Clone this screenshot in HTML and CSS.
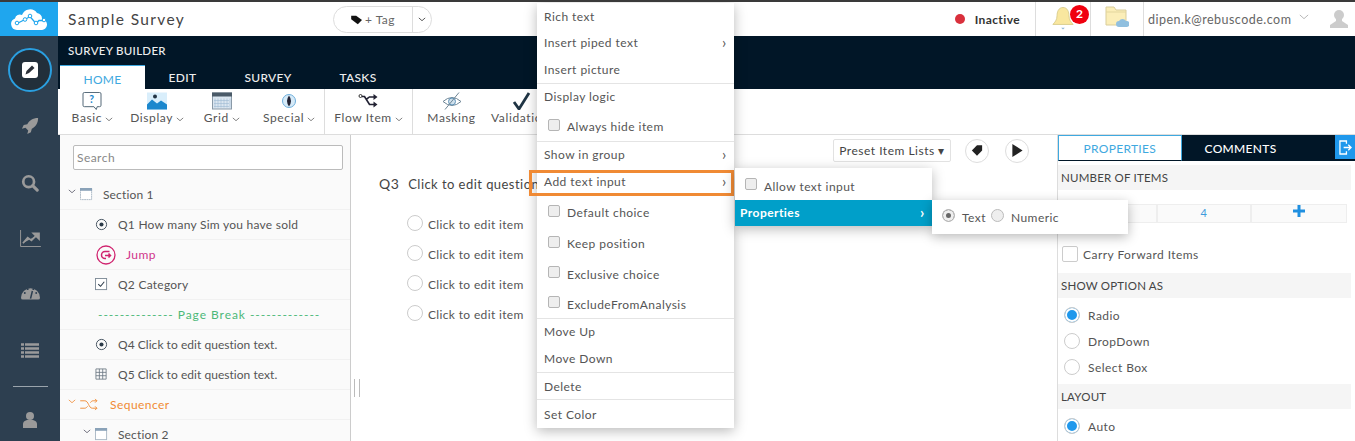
FILE: index.html
```html
<!DOCTYPE html>
<html lang="en">
<head>
<meta charset="utf-8">
<title>Sample Survey</title>
<link rel="stylesheet" href="styles.css">
</head>
<body>
<header class="topbar">
  <div class="logo">
    <svg viewBox="0 0 38 22" class="logo-svg"><path d="M7 22a6 6 0 0 1-2-11.600A5 5 0 0 1 12 7a8.500 8.500 0 0 1 15-2 6 6 0 0 1 5 6 5.500 5.500 0 0 1-1 11z" fill="#fff"/><path d="M8 15l7-3.500 5-3 6 7 3-3h4" fill="none" stroke="#1fa6ee" stroke-width="1.300"/><circle cx="7" cy="15" r="1.800" fill="#fff" stroke="#1fa6ee"/><circle cx="15" cy="11.500" r="1.800" fill="#fff" stroke="#1fa6ee"/><circle cx="20" cy="8" r="1.800" fill="#fff" stroke="#1fa6ee"/><circle cx="26" cy="15" r="1.800" fill="#fff" stroke="#1fa6ee"/><circle cx="34" cy="12" r="1.800" fill="#fff" stroke="#1fa6ee"/></svg>
  </div>
  <div class="title">Sample Survey</div>
  <div class="tagpill">
    <span class="tagmain"><svg viewBox="0 0 14 12" class="tagicon"><path d="M0 1h6l7 5-5 5-8-6z" fill="#111"/></svg>+ Tag</span>
    <span class="tagcaret"><svg viewBox="0 0 10 6" class="chev-s"><path d="M1 1l4 3.500L9 1" fill="none" stroke="#555" stroke-width="1.200"/></svg></span>
  </div>
  <div class="status"><i class="dot"></i>Inactive</div>
  <div class="hcell bellcell">
    <svg viewBox="0 0 24 26" class="bell"><path d="M12 1c5 0 6.500 5 6.500 9 0 5 2.500 7 4.500 9.500H1c2-2.500 4.500-4.500 4.500-9.500C5.500 6 7 1 12 1z" fill="#f9e79f" stroke="#d8cc8c"/><path d="M10 23h4l-2 2z" fill="#8fb6d8"/></svg>
    <span class="badge">2</span>
  </div>
  <div class="hcell foldercell">
    <svg viewBox="0 0 24 22" class="folder"><path d="M1 1h8l2 3h10v15H1z" fill="#fbeeb8" stroke="#d9cd9a"/><path d="M1 6h20" stroke="#e3d69d"/><path d="M14 21a3 3 0 0 1 0-6 4 4 0 0 1 7 0 3 3 0 0 1 1 6z" fill="#90bfdf"/></svg>
  </div>
  <div class="account">dipen.k@rebuscode.com
    <svg viewBox="0 0 12 7" class="chev-m"><path d="M1 1l5 4.500L11 1" fill="none" stroke="#aaa"/></svg>
    <svg viewBox="0 0 20 20" class="avatar"><circle cx="10" cy="6" r="5" fill="#ccc"/><path d="M7 10v2l-6 4v3h18v-3l-6-4v-2z" fill="#ccc"/></svg>
  </div>
</header>

<div class="content">
  <nav class="rail">
    <div class="rail-active"><svg viewBox="0 0 16 16" class="ico-edit"><rect width="16" height="16" rx="3" fill="#fff"/><path d="M3.500 12.500l1-3.500 5.500-5.500 2.500 2.500L7 11z" fill="#2a2f38"/><path d="M10.800 2.800l2.400 2.400" stroke="#fff" stroke-width=".7"/></svg></div>
    <svg viewBox="0 0 20 20" class="rail-ico rocket"><path d="M19 1c-6 0-10 3-12 7l-4 1-2 4 4-1 3 3-1 4 4-2 1-4c4-2 7-6 7-12z" fill="#9a9a9a"/></svg>
    <svg viewBox="0 0 20 20" class="rail-ico search"><circle cx="8.500" cy="8.500" r="6" fill="none" stroke="#9a9a9a" stroke-width="3"/><path d="M13 13l5 5" stroke="#9a9a9a" stroke-width="3.400" stroke-linecap="round"/></svg>
    <svg viewBox="0 0 22 18" class="rail-ico chart"><path d="M.500 0v17.500H22" fill="none" stroke="#9a9a9a"/><path d="M3 14l5-6 4 3 5-5M14 3.500h6v6z" fill="#9a9a9a" stroke="#9a9a9a" stroke-width="1.800"/></svg>
    <svg viewBox="0 0 20 16" class="rail-ico gauge"><path d="M0 14a10 10 0 1 1 20 0q0 2-2 2H2q-2 0-2-2z" fill="#9a9a9a"/><path d="M10 15l2-8" stroke="#2c3e50" stroke-width="1.600"/><circle cx="4" cy="9" r="1" fill="#2c3e50"/><circle cx="7" cy="5" r="1" fill="#2c3e50"/><circle cx="13" cy="5" r="1" fill="#2c3e50"/><circle cx="16" cy="9" r="1" fill="#2c3e50"/></svg>
    <svg viewBox="0 0 18 15" class="rail-ico list"><path d="M0 1.500h3M4 1.500h14M0 5.500h3M4 5.500h14M0 9.500h3M4 9.500h14M0 13.500h3M4 13.500h14" stroke="#9a9a9a" stroke-width="2.400"/></svg>
    <div class="rail-line"></div>
    <svg viewBox="0 0 14 16" class="rail-ico user"><circle cx="7" cy="4" r="4" fill="#9a9a9a"/><path d="M0 16v-4q0-3 4-4h6q4 1 4 4v4z" fill="#9a9a9a"/></svg>
  </nav>

  <div class="workspace">
    <div class="nav">
      <div class="nav-title">SURVEY BUILDER</div>
      <div class="tabs">
        <span class="tab tab-on">HOME</span>
        <span class="tab tab-edit">EDIT</span>
        <span class="tab tab-survey">SURVEY</span>
        <span class="tab tab-tasks">TASKS</span>
      </div>
    </div>

    <div class="ribbon">
      <div class="rgroup rgroup-q">
        <div class="ritem ritem-basic">
          <svg viewBox="0 0 20 19" class="ricon"><path d="M2 .500h16q1.500 0 1.500 1.500v12q0 1.500-1.500 1.500h-2.500l-1 3-2.500-3H2Q.500 15.500.500 14V2Q.500.500 2 .500z" fill="#fff" stroke="#4a6070"/><text x="10" y="12" class="qmark">?</text></svg>
          <span class="rlabel">Basic<svg viewBox="0 0 10 6" class="chev-r"><path d="M1 1l4 3.500L9 1" fill="none" stroke="#666"/></svg></span>
        </div>
        <div class="ritem ritem-display">
          <svg viewBox="0 0 20 17" class="ricon"><rect width="20" height="17" fill="#d9eefb"/><path d="M0 17v-5l5-5 5 4 4-3 6 4v5z" fill="#1b87cd"/><circle cx="8" cy="4" r="2" fill="#234"/></svg>
          <span class="rlabel">Display<svg viewBox="0 0 10 6" class="chev-r"><path d="M1 1l4 3.500L9 1" fill="none" stroke="#666"/></svg></span>
        </div>
        <div class="ritem ritem-grid">
          <svg viewBox="0 0 20 17" class="ricon"><rect x=".5" y=".5" width="19" height="16" fill="#dbe6f0" stroke="#8a9aa8"/><rect width="20" height="4" fill="#4a5a68"/><path d="M3 6v9M6 6v9M9 6v9M12 6v9M15 6v9M18 6v9M2 8h15M2 11h15M2 14h15" stroke="#9ebbd4" stroke-width=".6"/></svg>
          <span class="rlabel">Grid<svg viewBox="0 0 10 6" class="chev-r"><path d="M1 1l4 3.500L9 1" fill="none" stroke="#666"/></svg></span>
        </div>
        <div class="ritem ritem-special">
          <svg viewBox="0 0 20 17" class="ricon"><circle cx="10" cy="8.500" r="6.500" fill="#d6eaf8" stroke="#6daedb"/><path d="M10 3q4 5.500 0 11-4-5.500 0-11z" fill="#223"/></svg>
          <span class="rlabel">Special<svg viewBox="0 0 10 6" class="chev-r"><path d="M1 1l4 3.500L9 1" fill="none" stroke="#666"/></svg></span>
        </div>
      </div>
      <div class="rgroup rgroup-flow">
        <div class="ritem">
          <svg viewBox="0 0 20 15" class="ricon"><circle cx="2.500" cy="2.500" r="1.500" fill="none" stroke="#333"/><path d="M4 3h2.500l5 8h5M11 3.500l-3 3M11 3.500h5" fill="none" stroke="#223" stroke-width="1.700"/><path d="M15.500 .5l4 3-4 3zM15.500 8l4 3-4 3z" fill="#223"/></svg>
          <span class="rlabel">Flow Item<svg viewBox="0 0 10 6" class="chev-r"><path d="M1 1l4 3.500L9 1" fill="none" stroke="#666"/></svg></span>
        </div>
      </div>
      <div class="rgroup rgroup-mask">
        <div class="ritem ritem-mask">
          <svg viewBox="0 0 20 17" class="ricon"><path d="M1 9q9-8 18 0-9 8-18 0z" fill="none" stroke="#6f8696"/><circle cx="10" cy="9" r="3.500" fill="#cfe0ec" stroke="#5f93b8"/><path d="M17 0L3 17" stroke="#6f8696"/></svg>
          <span class="rlabel">Masking</span>
        </div>
        <div class="ritem ritem-valid">
          <svg viewBox="0 0 20 18" class="ricon"><path d="M3 10l5 7L18 1" fill="none" stroke="#1f3444" stroke-width="2.800"/></svg>
          <span class="rlabel">Validation</span>
        </div>
      </div>
    </div>

    <div class="panes">
      <aside class="tree">
        <div class="searchwrap"><div class="searchbox">Search</div></div>
        <div class="row row-sec"><svg viewBox="0 0 10 6" class="tchev"><path d="M1 1l4 3.500L9 1" fill="none" stroke="#556"/></svg><svg viewBox="0 0 14 14" class="ticon"><rect x=".5" y=".5" width="12" height="12" fill="#fff" stroke="#a9b7c4" stroke-dasharray="2 .5"/><rect width="13" height="3" fill="#8aa2b8"/></svg><span class="tl-sec">Section 1</span></div>
        <div class="row row-q"><svg viewBox="0 0 14 14" class="ticon"><circle cx="7" cy="7" r="5.500" fill="none" stroke="#3b4a58"/><circle cx="7" cy="7" r="2.200" fill="#2b3a48"/></svg><span class="tl-q">Q1 How many Sim you have sold</span></div>
        <div class="row row-jump"><svg viewBox="0 0 20 20" class="jicon"><circle cx="10" cy="10" r="9" fill="none" stroke="#d0246f" stroke-width="1.300"/><path d="M13.500 6.500H9a3.500 3.500 0 0 0 0 7h1M9 10.500h5.500M12.500 8.500l2 2-2 2" fill="none" stroke="#d0246f" stroke-width="1.500"/></svg><span class="tl-jump">Jump</span></div>
        <div class="row row-q"><svg viewBox="0 0 14 14" class="ticon"><rect x=".5" y=".5" width="12" height="12" fill="#fff" stroke="#7d8a96"/><path d="M3.500 6.500l2.500 2.500 4-5" fill="none" stroke="#2b3a48" stroke-width="1.100"/></svg><span class="tl-q">Q2 Category</span></div>
        <div class="row row-break">-------------- Page Break -------------</div>
        <div class="row row-q"><svg viewBox="0 0 14 14" class="ticon"><circle cx="7" cy="7" r="5.500" fill="none" stroke="#3b4a58"/><circle cx="7" cy="7" r="2.200" fill="#2b3a48"/></svg><span class="tl-q tl-tight">Q4 Click to edit question text.</span></div>
        <div class="row row-q"><svg viewBox="0 0 14 14" class="ticon"><path d="M1 1h11v11H1zM1 4.700h11M1 8.300h11M4.700 1v11M8.300 1v11" fill="none" stroke="#6b7782" stroke-width=".9"/></svg><span class="tl-q tl-tight">Q5 Click to edit question text.</span></div>
        <div class="row row-seq"><svg viewBox="0 0 10 6" class="tchev"><path d="M1 1l4 3.500L9 1" fill="none" stroke="#f08a34"/></svg><svg viewBox="0 0 20 14" class="sicon"><path d="M0 3h5c4 0 4 8 8 8h5M0 11h5c1 0 2-1 3-2M11 5c1-1 1-2 3-2h4M16 1l2 2-2 2M16 9l2 2-2 2" fill="none" stroke="#f08a34"/></svg><span class="tl-seq">Sequencer</span></div>
        <div class="row row-sec2"><svg viewBox="0 0 10 6" class="tchev"><path d="M1 1l4 3.500L9 1" fill="none" stroke="#556"/></svg><svg viewBox="0 0 14 14" class="ticon"><rect x=".5" y=".5" width="12" height="12" fill="#fff" stroke="#a9b7c4"/><rect width="13" height="3" fill="#8aa2b8"/></svg><span class="tl-sec2">Section 2</span></div>
      </aside>

      <main class="canvas">
        <div class="grip"></div>
        <div class="tools">
          <div class="preset">Preset Item Lists ▾</div>
          <div class="circ"><svg viewBox="0 0 14 14" class="circ-ico"><path d="M13 1v6l-6 6-6-6 6-6z" fill="#222"/></svg></div>
          <div class="circ circ-play"><svg viewBox="0 0 12 14" class="circ-ico"><path d="M1 0l11 7-11 7z" fill="#222"/></svg></div>
        </div>
        <div class="qhead"><span class="qnum">Q3</span><span>Click to edit question text.</span></div>
        <div class="opt"><i class="oradio"></i>Click to edit item</div>
        <div class="opt"><i class="oradio"></i>Click to edit item</div>
        <div class="opt"><i class="oradio"></i>Click to edit item</div>
        <div class="opt"><i class="oradio"></i>Click to edit item</div>
      </main>

      <aside class="props">
        <div class="ptabs">
          <span class="ptab ptab-on">PROPERTIES</span>
          <span class="ptab ptab-off">COMMENTS</span>
          <span class="ptab-exit"><svg viewBox="0 0 14 16" class="exit"><path d="M8 4V1H1v14h7v-3M5 8h8M10 5l3 3-3 3" fill="none" stroke="#fff" stroke-width="1.400"/></svg></span>
        </div>
        <div class="phead phead-first">NUMBER OF ITEMS</div>
        <div class="stepper"><span class="scell scell-a"></span><span class="scell scell-b">4</span><span class="scell scell-c"><svg viewBox="0 0 12 12" class="plus"><path d="M6 0v12M0 6h12" stroke="#1f8fe0" stroke-width="3"/></svg></span></div>
        <div class="carry"><i class="pcheck"></i>Carry Forward Items</div>
        <div class="phead">SHOW OPTION AS</div>
        <div class="popts">
          <div class="popt"><i class="pradio pradio-on"></i>Radio</div>
          <div class="popt"><i class="pradio"></i>DropDown</div>
          <div class="popt"><i class="pradio"></i>Select Box</div>
        </div>
        <div class="phead phead-layout">LAYOUT</div>
        <div class="popts">
          <div class="popt"><i class="pradio pradio-on"></i>Auto</div>
        </div>
      </aside>
    </div>
  </div>
</div>

<div class="menu menu-main">
  <div class="mi">Rich text</div>
  <div class="mi mi-26 mi-up">Insert piped text<span class="arrow">›</span></div>
  <div class="mi mi-last mi-pic">Insert picture</div>
  <div class="mi mi-26 mi-up">Display logic</div>
  <div class="mi mi-c mi-always"><i class="cb cb-9"></i>Always hide item</div>
  <div class="mi mi-up">Show in group<span class="arrow">›</span></div>
  <div class="mi mi-up">Add text input<span class="arrow">›</span></div>
  <div class="mi mi-c mi-def"><i class="cb cb-9"></i>Default choice</div>
  <div class="mi mi-c"><i class="cb cb-8"></i>Keep position</div>
  <div class="mi mi-c mi-ex"><i class="cb cb-7"></i>Exclusive choice</div>
  <div class="mi mi-c mi-x"><i class="cb cb-7"></i>ExcludeFromAnalysis</div>
  <div class="mi mi-up">Move Up</div>
  <div class="mi mi-last mi-up">Move Down</div>
  <div class="mi mi-last">Delete</div>
  <div class="mi mi-end">Set Color</div>
</div>
<div class="hilite"></div>
<div class="menu menu-sub">
  <div class="sub-allow"><i class="cb"></i>Allow text input</div>
  <div class="sub-prop">Properties<span class="arrow-w">›</span></div>
</div>
<div class="menu menu-sub2">
  <i class="mradio mradio-on"></i><span class="m2t">Text</span><i class="mradio mradio-2"></i><span class="m2t">Numeric</span>
</div>
</body>
</html>
```
FILE: styles.css
```css
* { box-sizing: border-box; }
html, body { margin: 0; padding: 0; }
body {
  height: 441px; width: 1355px; overflow: hidden; position: relative;
  border-top: 2px solid #3a3a3a;
  font-family: "Lato", "Liberation Sans", sans-serif;
  font-size: 12px; letter-spacing: .45px; color: #555; background: #fff;
}
i { display: inline-block; }

/* top bar */
.topbar { height: 34px; display: flex; align-items: stretch; background: #fff; }
.logo { width: 58px; background: #1fa6ee; display: flex; align-items: center; justify-content: center; }
.logo-svg { width: 38px; height: 22px; }
.title { width: 275px; padding-left: 10px; font-size: 15.500px; letter-spacing: 1.350px; line-height: 34px; color: #444; }
.tagpill { width: 99px; height: 27px; margin-top: 4px; border: 1px solid #ddd; border-radius: 14px; display: flex; }
.tagmain { width: 79px; border-right: 1px solid #ddd; display: flex; align-items: center; justify-content: center; gap: 2px; color: #666; font-size: 12px; }
.tagicon { width: 12px; height: 10px; }
.tagcaret { flex: 1; display: flex; align-items: center; justify-content: center; }
.chev-s { width: 8px; height: 5px; }
.status { width: 603px; display: flex; align-items: center; justify-content: flex-end; padding-right: 15px; color: #333; font-size: 12px; font-weight: 700; letter-spacing: .4px; }
.dot { width: 10px; height: 10px; border-radius: 50%; background: #d9303c; margin-right: 10px; }
.hcell { border-left: 1px solid #ddd; position: relative; display: flex; justify-content: center; }
.bellcell { width: 55px; padding-top: 4px; }
.bell { width: 22px; height: 25px; }
.badge { position: absolute; left: 34px; top: 3px; width: 19px; height: 19px; border-radius: 50%; background: #f0000f; color: #fff; font-size: 12px; font-weight: 700; text-align: center; line-height: 18px; letter-spacing: 0; }
.foldercell { width: 53px; padding-top: 4px; }
.folder { width: 24px; height: 22px; }
.account { flex: 1; border-left: 1px solid #ddd; padding-left: 4px; display: flex; align-items: center; font-size: 12.500px; letter-spacing: .48px; color: #666; }
.chev-m { width: 10px; height: 6px; margin-left: 8px; margin-top: -4px; }
.avatar { width: 20px; height: 20px; margin-left: 20px; }

/* frame */
.content { display: flex; height: 405px; }
.rail { width: 58px; background: #2d3f50; display: flex; flex-direction: column; align-items: center; padding-left: 2px; flex: none; }
.rail-active { width: 44px; height: 44px; margin-top: 12px; border: 2px solid #2a9fe0; border-radius: 50%; background: #222f3b; display: flex; align-items: center; justify-content: center; flex: none; }
.ico-edit { width: 16px; height: 16px; }
.rail-ico { display: block; flex: none; }
.rocket { width: 18px; height: 18px; margin-top: 25px; }
.search { width: 18px; height: 18px; margin-top: 39px; }
.chart { width: 21px; height: 17px; margin-top: 38px; }
.gauge { width: 19px; height: 16px; margin-top: 37px; }
.list { width: 18px; height: 15px; margin-top: 43px; }
.rail-line { width: 35px; height: 1px; background: #9aa4ac; margin-top: 28px; flex: none; }
.user { width: 14px; height: 16px; margin-top: 25px; }
.workspace { flex: 1; display: flex; flex-direction: column; min-width: 0; }

/* navy */
.nav { height: 53px; background: #011627; display: flex; flex-direction: column; justify-content: space-between; }
.nav-title { padding: 8px 0 0 10px; font-size: 11.500px; color: #eee; font-weight: 500; letter-spacing: .3px; }
.tabs { display: flex; height: 24px; padding-left: 2px; }
.tab { font-size: 12px; color: #eee; font-weight: 500; line-height: 26px; text-align: center; letter-spacing: .3px; }
.tab-on { width: 85px; background: #fff; color: #3fa9e0; border-top: 1px solid #3fa9e0; font-weight: 400; line-height: 27px; }
.tab-edit { width: 75px; }
.tab-survey { width: 96px; }
.tab-tasks { width: 84px; }

/* ribbon */
.ribbon { height: 46px; border-bottom: 1px solid #ddd; display: flex; background: #fff; }
.rgroup { display: flex; border-right: 1px solid #ddd; height: 45px; }
.rgroup-q { width: 267px; }
.rgroup-flow { width: 88px; justify-content: center; }
.rgroup-mask { flex: 1; border-right: 0; }
.ritem { display: flex; flex-direction: column; align-items: center; padding-top: 3px; font-size: 12px; color: #555; letter-spacing: .62px; }
.ritem-basic { width: 67px; padding-left: 2px; }
.ritem-display { width: 65px; }
.ritem-grid { width: 65px; }
.ritem-special { width: 70px; }
.ritem-mask { width: 78px; padding-right: 1px; }
.ritem-valid { width: 46px; align-items: flex-start; }
.ritem-valid .ricon { margin-left: 20px; }
.ricon { width: 20px; height: 18px; display: block; flex: none; }
.rlabel { display: flex; align-items: center; gap: 3px; line-height: 18px; margin-top: -1px; white-space: nowrap; }
.chev-r { width: 8px; height: 5px; margin-top: 2px; }
.qmark { font-size: 11px; font-weight: 700; fill: #1b87cd; text-anchor: middle; }

/* tree */
.panes { flex: 1; display: flex; min-height: 0; }
.tree { width: 293px; border-left: 2px solid #2d3f50; background: #fafafa; border-right: 1px solid #ccc; flex: none; overflow: hidden; }
.searchwrap { padding: 10px 7px 10px 13px; }
.searchbox { width: 270px; height: 25px; border: 1px solid #bbb; border-radius: 2px; background: #fff; padding-left: 3px; line-height: 23px; color: #888; }
.row { height: 30px; border-bottom: 1px solid #f1f1f1; display: flex; align-items: center; color: #555; white-space: nowrap; }
.ticon { width: 13px; height: 13px; flex: none; }
.tchev { width: 8px; height: 5px; flex: none; margin-top: -6px; }
.row-sec { padding-left: 8px; }
.row-sec .ticon { margin-left: 4px; }
.tl-sec { margin-left: 10px; letter-spacing: .15px; }
.row-q { padding-left: 35px; }
.tl-q { margin-left: 10px; letter-spacing: .25px; }
.tl-tight { letter-spacing: .04px; }
.row-jump { padding-left: 35px; }
.jicon { width: 20px; height: 20px; flex: none; margin-left: 1px; }
.tl-jump { margin-left: 10px; color: #d0348a; }
.row-break { padding-left: 38px; color: #4cb878; letter-spacing: .95px; }
.row-seq { padding-left: 8px; color: #f08a34; }
.sicon { width: 19px; height: 13px; margin-left: 4px; flex: none; }
.tl-seq { margin-left: 11px; }
.row-sec2 { padding-left: 23px; }
.row-sec2 .ticon { margin-left: 4px; }
.tl-sec2 { margin-left: 10px; letter-spacing: .15px; }

/* canvas */
.canvas { flex: 1; min-width: 0; position: relative; background: #fff; padding-left: 28px; }
.grip { position: absolute; left: 3px; top: 244px; width: 6px; height: 18px; border-left: 1px solid #bbb; border-right: 1px solid #bbb; }
.tools { display: flex; justify-content: flex-end; align-items: center; gap: 16px; padding: 4px 28px 0 0; height: 27px; }
.preset { width: 118px; height: 23px; border: 1px solid #e2e2e2; border-radius: 2px; text-align: center; line-height: 21px; color: #444; white-space: nowrap; letter-spacing: .5px; margin-right: -2px; }
.circ { width: 24px; height: 24px; border: 1px solid #ddd; border-radius: 50%; display: flex; align-items: center; justify-content: center; }
.circ-ico { width: 12px; height: 13px; }
.qhead { display: flex; gap: 9px; margin-top: 12px; line-height: 20px; font-size: 13px; color: #444; white-space: nowrap; }
.qnum { font-size: 14px; }
.opt { height: 30px; display: flex; align-items: center; padding-left: 28px; color: #555; letter-spacing: .35px; }
.qhead + .opt { margin-top: 15px; }
.oradio { width: 16px; height: 16px; border: 1px solid #ccc; border-radius: 50%; margin-right: 5px; margin-top: -2px; }

/* properties */
.props { width: 298px; flex: none; border-left: 1px solid #ddd; padding-right: 4px; overflow: hidden; }
.ptabs { display: flex; height: 26px; background: #011627; margin-right: -4px; }
.ptab { font-size: 12px; line-height: 28px; text-align: center; letter-spacing: .3px; }
.ptab-on { width: 124px; background: #fff; color: #3fa9e0; border: 1px solid #3fa9e0; border-bottom-color: #011627; line-height: 26px; }
.ptab-off { width: 154px; color: #fff; font-weight: 500; text-align: left; padding-left: 23px; }
.ptab-exit { width: 20px; height: 24px; background: #1f98ec; display: flex; align-items: center; justify-content: center; }
.exit { width: 13px; height: 15px; }
.phead { height: 25px; background: #f5f5f5; line-height: 25px; padding-left: 3px; font-size: 11.500px; color: #444; letter-spacing: .2px; }
.phead-first { margin-top: 4px; }
.stepper { display: flex; padding-top: 14px; margin-right: 2px; height: 47px; }
.scell { height: 19px; border: 1px solid #eee; background: #fafafa; text-align: center; line-height: 16px; color: #3f9bdc; font-size: 11px; }
.scell-a { width: 99px; border-left: 0; }
.scell-b { width: 94px; }
.scell-c { width: 96px; }
.plus { width: 12px; height: 12px; }
.carry { height: 36px; display: flex; align-items: center; padding: 0 0 2px 4px; color: #555; }
.pcheck { width: 16px; height: 16px; border: 1px solid #ccc; border-radius: 2px; margin-right: 5px; }
.popts { display: flex; flex-direction: column; padding-top: 4px; }
.popt { height: 26px; display: flex; align-items: center; padding-left: 6px; color: #555; }
.pradio { width: 16px; height: 16px; border: 1px solid #ccc; border-radius: 50%; margin-right: 8px; background: #fff; }
.pradio-on { background: #1f98ec; box-shadow: inset 0 0 0 2px #fff; }
.phead-layout { margin-top: 4px; }

/* menus */
.menu { position: absolute; background: #fff; box-shadow: 0 3px 12px rgba(0,0,0,.28); }
.menu-main { left: 537px; top: 1px; width: 197px; height: 425px; }
.mi { height: 27px; padding-left: 7px; display: flex; align-items: center; position: relative; color: #555; white-space: nowrap; }
.mi-26 { height: 26px; }
.mi-up { padding-bottom: 2px; }
.mi-last { border-bottom: 1px solid #e4e4e4; }
.mi-pic { height: 28px; }
.mi-c { height: 31px; padding-left: 30px; }
.mi-always { height: 32px; padding-top: 2px; border-bottom: 1px solid #e4e4e4; }
.mi-def { height: 32px; }
.mi-ex { height: 30px; }
.mi-x { height: 30px; padding-top: 1px; border-bottom: 1px solid #e4e4e4; }
.mi-end { height: 28px; }
.cb { width: 12px; height: 12px; border: 1px solid #b5b5b5; border-radius: 2px; background: #eee; position: absolute; left: 11px; }
.cb-9 { top: 9px; }
.cb-8 { top: 8px; }
.cb-7 { top: 7px; }
.arrow { position: absolute; left: 185px; top: 3px; font-size: 15px; color: #555; }
.hilite { position: absolute; left: 529px; top: 168px; width: 205px; height: 26px; border: 3px solid #f08a34; }
.menu-sub { left: 735px; top: 166px; width: 197px; height: 58px; }
.sub-allow { height: 32px; position: relative; padding: 11px 0 0 29px; color: #555; white-space: nowrap; }
.sub-allow .cb { left: 10px; top: 10px; }
.sub-prop { height: 26px; background: #009fc9; color: #fff; font-weight: 700; line-height: 26px; padding-left: 5px; position: relative; }
.arrow-w { position: absolute; left: 185px; top: -1px; font-size: 15px; }
.menu-sub2 { left: 932px; top: 198px; width: 196px; height: 34px; display: flex; align-items: center; padding-left: 10px; }
.mradio { width: 13px; height: 13px; border: 1px solid #bbb; border-radius: 50%; background: #eee; margin-top: -4px; }
.mradio-on { background: #666; box-shadow: inset 0 0 0 3px #eee; }
.mradio-2 { margin-left: 5px; }
.m2t { margin-left: 7px; color: #555; }
```
